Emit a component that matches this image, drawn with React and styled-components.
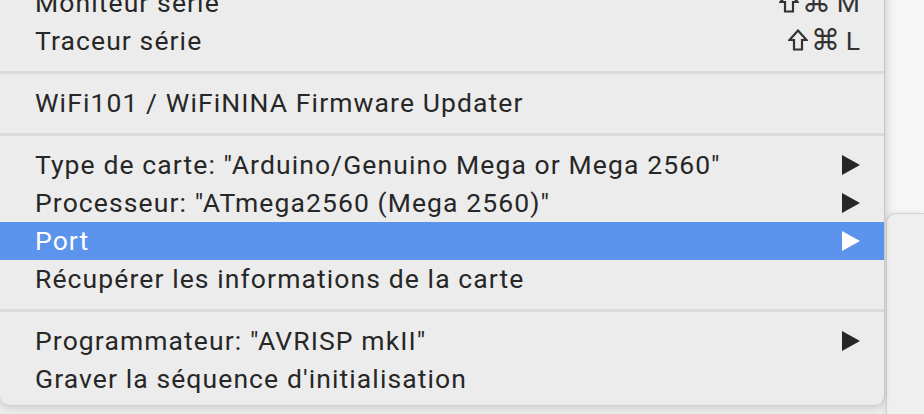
import React from "react";
import styled, { createGlobalStyle } from "styled-components";

const Global = createGlobalStyle`
  html, body { margin: 0; padding: 0; background: #ebebeb; overflow: hidden; }
  * { box-sizing: border-box; }
`;

const Screen = styled.div`
  display: flex;
  width: 924px;
  height: 414px;
  overflow: hidden;
  background: #ebebeb;
  font-family: Roboto, "Liberation Sans", sans-serif;
`;

const Menu = styled.div`
  flex: 0 0 885px;
  align-self: flex-start;
  margin-top: -16px;
  padding-bottom: 7px;
  background: #ececec;
  border-right: 1px solid #c7c7c7;
  border-bottom: 1px solid #cfcfcf;
  border-radius: 0 0 10px 10px;
  box-shadow: 0 2px 6px rgba(0, 0, 0, 0.12);
  position: relative;
  z-index: 2;
`;

const Row = styled.div`
  display: flex;
  align-items: center;
  height: 38px;
  padding: 0 24px 2px 35px;
  font-size: 26.5px;
  letter-spacing: 1.1px;
  color: ${(p) => (p.$active ? "#ffffff" : "#272727")};
  background: ${(p) => (p.$active ? "#5b93ed" : "transparent")};
`;

const Label = styled.span`
  flex: 1;
  white-space: nowrap;
`;

const Shortcut = styled.span`
  display: flex;
  align-items: center;
  gap: 3px;
  color: #333;
  letter-spacing: 0;
`;

const Cmd = styled.span`
  font-family: "DejaVu Sans", sans-serif;
  font-size: 29px;
  line-height: 1;
`;

const Key = styled.span`
  font-size: 26.5px;
  margin-left: 3px;
`;

const ShiftIcon = () => (
  <svg width="20" height="22" viewBox="0 0 20 22" fill="none">
    <path
      d="M10 1.5 L18.5 11 L14 11 L14 20.5 L6 20.5 L6 11 L1.5 11 Z"
      stroke="currentColor"
      strokeWidth="2.2"
      strokeLinejoin="miter"
    />
  </svg>
);

const Arrow = styled.span`
  width: 0;
  height: 0;
  margin-top: 2px;
  border-top: 10px solid transparent;
  border-bottom: 10px solid transparent;
  border-left: 18px solid currentColor;
`;

const Separator = styled.div`
  height: 24px;
  display: flex;
  align-items: center;
  &::after {
    content: "";
    flex: 1;
    height: 3px;
    background: #dbdbdb;
  }
`;

const Side = styled.div`
  flex: 1;
  display: flex;
  flex-direction: column;
  padding-top: 213px;
  background: linear-gradient(to right, #e9e9e9, #f6f6f6 12px, #f7f7f7);
`;

const Submenu = styled.div`
  flex: 1;
  margin-left: 1px;
  background: #efefef;
  border-top: 1px solid #d2d2d2;
  border-left: 1px solid #d2d2d2;
  border-top-left-radius: 10px;
  box-shadow: -1px -1px 4px rgba(0, 0, 0, 0.08);
`;

const items = [
  { label: "Moniteur série", shortcut: "M" },
  { label: "Traceur série", shortcut: "L" },
  "sep",
  { label: "WiFi101 / WiFiNINA Firmware Updater" },
  "sep",
  { label: 'Type de carte: "Arduino/Genuino Mega or Mega 2560"', sub: true },
  { label: 'Processeur: "ATmega2560 (Mega 2560)"', sub: true },
  { label: "Port", sub: true, active: true },
  { label: "Récupérer les informations de la carte" },
  "sep",
  { label: 'Programmateur: "AVRISP mkII"', sub: true },
  { label: "Graver la séquence d'initialisation" },
];

export default function App() {
  return (
    <>
      <Global />
      <Screen>
        <Menu>
          {items.map((it, i) =>
            it === "sep" ? (
              <Separator key={i} />
            ) : (
              <Row key={i} $active={it.active}>
                <Label>{it.label}</Label>
                {it.shortcut && (
                  <Shortcut>
                    <ShiftIcon />
                    <Cmd>⌘</Cmd>
                    <Key>{it.shortcut}</Key>
                  </Shortcut>
                )}
                {it.sub && <Arrow />}
              </Row>
            )
          )}
        </Menu>
        <Side>
          <Submenu />
        </Side>
      </Screen>
    </>
  );
}
